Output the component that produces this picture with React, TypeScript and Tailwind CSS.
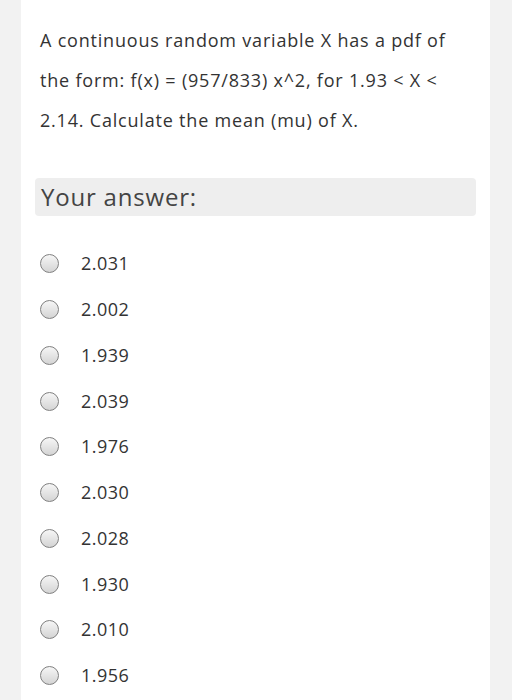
import React from "react";

const options = ["2.031", "2.002", "1.939", "2.039", "1.976", "2.030", "2.028", "1.930", "2.010", "1.956"];

export default function App() {
  return (
    <div className="min-h-[700px] bg-[#f2f2f2] pl-[21px] pr-[22px]" style={{ fontFamily: '"Open Sans", sans-serif' }}>
      <div className="bg-white min-h-[700px] px-[14px] pt-[20px]">
        <div className="pl-[5px] text-[18px] leading-[40px] tracking-[0.8px] text-[#333333]">
          A continuous random variable X has a pdf of
          <br />
          the form: f(x) = (957/833) x^2, for 1.93 &lt; X &lt;
          <br />
          2.14. Calculate the mean (mu) of X.
        </div>
        <div className="mt-[38px] h-[38px] rounded-[4px] bg-[#eeeeee] pl-[6px] flex items-center text-[24px] tracking-[0.8px] text-[#444444]">
          Your answer:
        </div>
        <div className="mt-[25px] flex flex-col">
          {options.map((o) => (
            <div key={o} className="h-[45.75px] flex items-center pl-[5px]">
              <div className="w-[19px] h-[19px] rounded-full border border-[#808080] bg-[linear-gradient(to_bottom,#f6f6f6,#d4d4d4)]" />
              <span className="ml-[22px] text-[18px] tracking-[0.45px] text-[#333333]">{o}</span>
            </div>
          ))}
        </div>
      </div>
    </div>
  );
}
